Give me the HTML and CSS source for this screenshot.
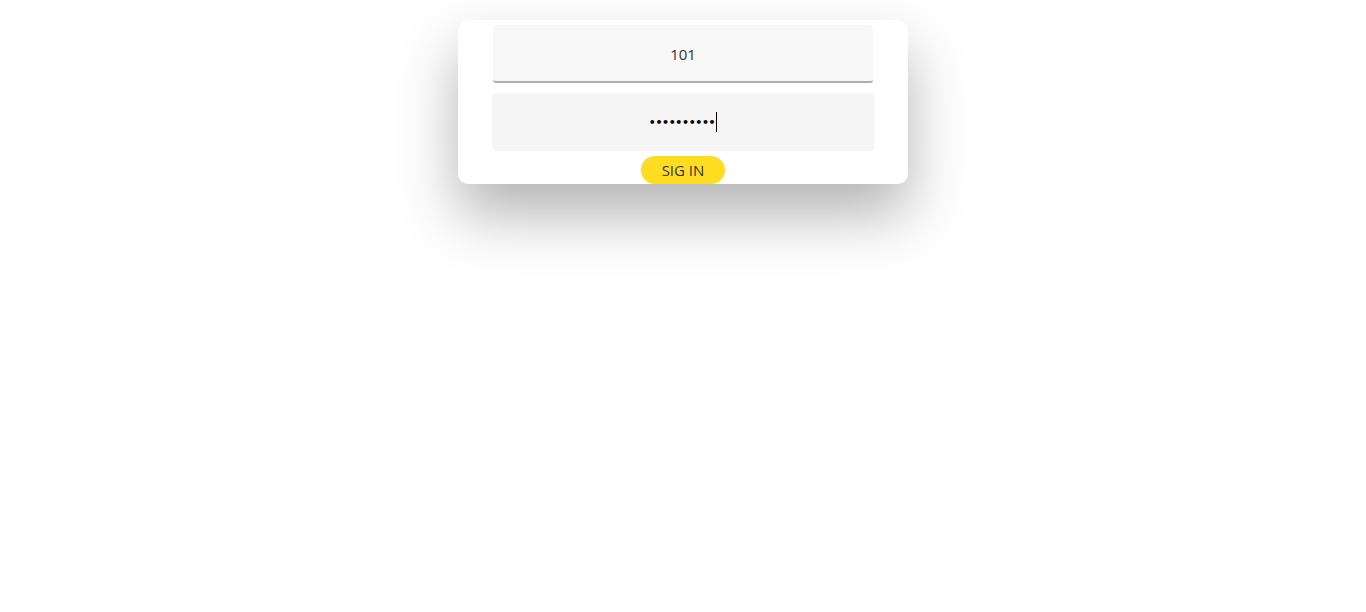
FILE: index.html
```html
<!DOCTYPE html>
<html>
<head>
<meta charset="utf-8">
<link rel="stylesheet" href="styles.css">
</head>
<body>
<div class="page">
  <form class="card">
    <div class="field field-user"><span class="value">101</span></div>
    <div class="field field-pass"><span class="dots">••••••••••</span><span class="caret"></span></div>
    <button type="button" class="btn">SIG IN</button>
  </form>
</div>
</body>
</html>
```
FILE: styles.css
```css
html, body {
  margin: 0;
  padding: 0;
  height: 100%;
  background: #ffffff;
  font-family: "Open Sans", "Noto Sans", sans-serif;
}
.page {
  min-height: 100vh;
  box-sizing: border-box;
  display: flex;
  justify-content: center;
  align-items: flex-start;
  padding-top: 20px;
}
.card {
  width: 450px;
  height: 164px;
  box-sizing: border-box;
  background: #fff;
  border-radius: 10px;
  box-shadow: 0 30px 60px rgba(0, 0, 0, 0.3);
  display: flex;
  flex-direction: column;
  align-items: center;
  padding-top: 5px;
  overflow: hidden;
  margin: 0;
}
.field {
  width: 382px;
  height: 58px;
  box-sizing: border-box;
  display: flex;
  align-items: center;
  justify-content: center;
  color: #333;
  font-size: 15px;
  flex-shrink: 0;
}
.field-user {
  width: 380px;
  background: #f8f8f8;
  border-radius: 4px 4px 3px 3px;
  border-bottom: 2px solid #aeaeae;
  padding-top: 2px;
}
.field-pass {
  margin-top: 10px;
  background: #f5f5f5;
  border-radius: 4px;
}
.dots {
  color: #000;
  font-family: "DejaVu Sans", sans-serif;
  font-size: 11px;
  font-weight: bold;
  letter-spacing: -0.4px;
}
.caret {
  display: inline-block;
  width: 1px;
  height: 20px;
  background: #000;
  margin-left: 1px;
}
.btn {
  margin-top: 5px;
  width: 84px;
  height: 28px;
  border: none;
  border-radius: 14px;
  background: #fddc22;
  color: #333;
  font-family: "Open Sans", "Noto Sans", sans-serif;
  font-size: 15px;
  padding: 0;
  flex-shrink: 0;
}
```
